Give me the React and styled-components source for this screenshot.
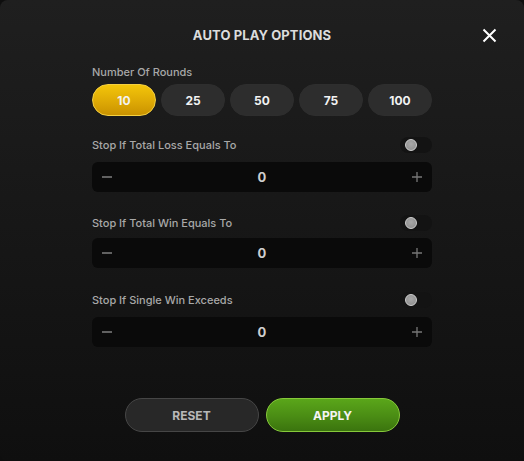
import React, { useState } from "react";
import styled, { createGlobalStyle } from "styled-components";

const GlobalStyle = createGlobalStyle`
  html, body {
    margin: 0;
    padding: 0;
    background: #0e0e0e;
  }
  body {
    font-family: Inter, "Noto Sans", "Liberation Sans", sans-serif;
  }
`;

const Modal = styled.div`
  position: relative;
  width: 524px;
  height: 461px;
  box-sizing: border-box;
  border-radius: 8px;
  background: linear-gradient(180deg, #1f1f1f 0%, #161616 55%, #0f0f0f 100%);
  padding-top: 26px;
  display: flex;
  flex-direction: column;
  align-items: center;
`;

const Title = styled.h2`
  margin: 0;
  height: 18px;
  line-height: 18px;
  font-size: 13px;
  font-weight: 700;
  color: #dcdcdc;
  letter-spacing: 0.1px;
`;

const Close = styled.button`
  position: absolute;
  top: 26px;
  right: 26px;
  width: 18px;
  height: 18px;
  padding: 0;
  border: none;
  background: none;
  cursor: pointer;
  display: flex;
  align-items: center;
  justify-content: center;
`;

const Content = styled.div`
  width: 340px;
  margin-top: 21px;
  display: flex;
  flex-direction: column;
`;

const Label = styled.div`
  font-size: 11px;
  line-height: 14px;
  font-weight: 500;
  color: #a8a8a8;
`;

const Pills = styled.div`
  margin-top: 5px;
  display: flex;
  gap: 5px;
`;

const Pill = styled.button`
  width: 64px;
  height: 32px;
  border-radius: 16px;
  box-sizing: border-box;
  font-family: inherit;
  font-size: 12px;
  font-weight: 700;
  color: #f2f2f2;
  cursor: pointer;
  border: 1px solid ${(p) => (p.$active ? "#f5d040" : "#2e2e2e")};
  background: ${(p) =>
    p.$active
      ? "linear-gradient(180deg, #f3c50a 0%, #dca705 60%, #c99200 100%)"
      : "#2d2d2d"};
`;

const Section = styled.div`
  margin-top: ${(p) => p.$top}px;
  display: flex;
  flex-direction: column;
  gap: ${(p) => p.$gap}px;
`;

const LabelRow = styled.div`
  display: flex;
  align-items: center;
  justify-content: space-between;
  height: 16px;
`;

const Toggle = styled.button`
  width: 32px;
  height: 16px;
  padding: 0 0 0 5px;
  border: none;
  border-radius: 8px;
  background: #131313;
  display: flex;
  align-items: center;
  cursor: pointer;
`;

const Knob = styled.span`
  width: 12px;
  height: 12px;
  border-radius: 50%;
  box-sizing: border-box;
  border: 1px solid #cfcfcf;
  background: radial-gradient(circle at 50% 40%, #a8a8a8 0%, #8a8a8a 100%);
`;

const Field = styled.div`
  height: 30px;
  border-radius: 6px;
  background: #0a0a0a;
  display: flex;
  align-items: center;
  justify-content: space-between;
  padding: 0 7px;
`;

const Step = styled.button`
  width: 16px;
  height: 16px;
  padding: 0;
  border: none;
  background: none;
  display: flex;
  align-items: center;
  justify-content: center;
  cursor: pointer;
`;

const Value = styled.span`
  font-size: 13px;
  font-weight: 700;
  color: #cfcfcf;
`;

const Actions = styled.div`
  margin-top: 51px;
  display: flex;
  gap: 7px;
`;

const ActionButton = styled.button`
  width: 134px;
  height: 34px;
  border-radius: 17px;
  box-sizing: border-box;
  font-family: inherit;
  font-size: 12px;
  font-weight: 700;
  cursor: pointer;
  color: ${(p) => (p.$primary ? "#f4f4f4" : "#b8b8b8")};
  border: 1px solid ${(p) => (p.$primary ? "#86c93a" : "#464646")};
  background: ${(p) =>
    p.$primary
      ? "linear-gradient(180deg, #5aa61a 0%, #4a8c14 55%, #3b740e 100%)"
      : "#282828"};
`;

const Minus = () => (
  <svg width="12" height="12" viewBox="0 0 12 12">
    <path d="M1 6h10" stroke="#777" strokeWidth="1.6" />
  </svg>
);

const Plus = () => (
  <svg width="12" height="12" viewBox="0 0 12 12">
    <path d="M1 6h10M6 1v10" stroke="#777" strokeWidth="1.3" />
  </svg>
);

const stops = [
  { label: "Stop If Total Loss Equals To", top: 21, gap: 9 },
  { label: "Stop If Total Win Equals To", top: 23, gap: 7 },
  { label: "Stop If Single Win Exceeds", top: 24, gap: 9 },
];

export default function App() {
  const [rounds, setRounds] = useState(10);
  return (
    <>
      <GlobalStyle />
      <Modal>
        <Title>AUTO PLAY OPTIONS</Title>
        <Close aria-label="close">
          <svg width="15" height="15" viewBox="0 0 15 15">
            <path d="M1.5 1.5l12 12M13.5 1.5l-12 12" stroke="#fff" strokeWidth="2" />
          </svg>
        </Close>
        <Content>
          <Label>Number Of Rounds</Label>
          <Pills>
            {[10, 25, 50, 75, 100].map((n) => (
              <Pill key={n} $active={n === rounds} onClick={() => setRounds(n)}>
                {n}
              </Pill>
            ))}
          </Pills>
          {stops.map((s) => (
            <Section key={s.label} $top={s.top} $gap={s.gap}>
              <LabelRow>
                <Label>{s.label}</Label>
                <Toggle>
                  <Knob />
                </Toggle>
              </LabelRow>
              <Field>
                <Step>
                  <Minus />
                </Step>
                <Value>0</Value>
                <Step>
                  <Plus />
                </Step>
              </Field>
            </Section>
          ))}
        </Content>
        <Actions>
          <ActionButton>RESET</ActionButton>
          <ActionButton $primary>APPLY</ActionButton>
        </Actions>
      </Modal>
    </>
  );
}
